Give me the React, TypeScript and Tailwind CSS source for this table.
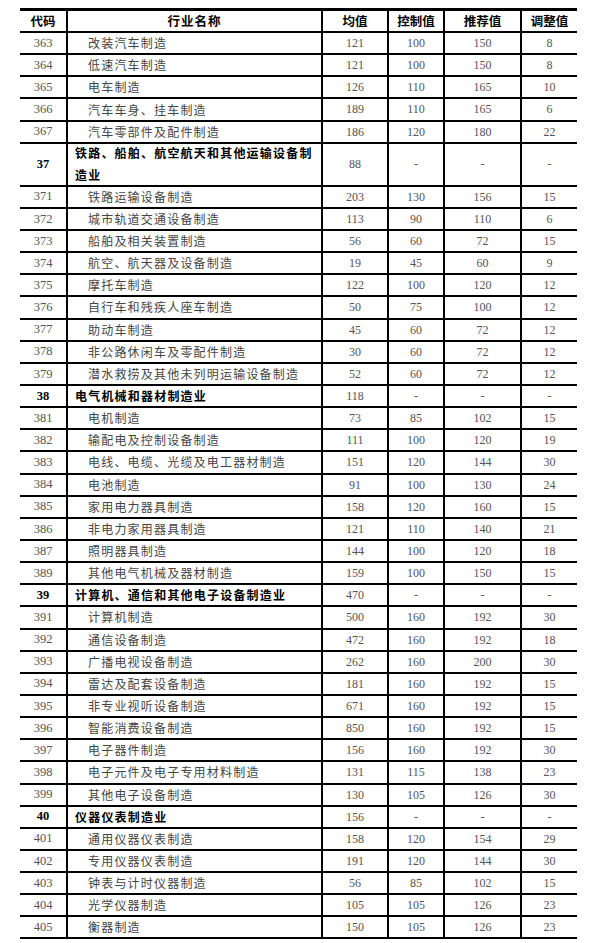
import React from 'react';

type Row = {
  code: string;
  name: string;
  vals: [string, string, string, string];
  head?: boolean;
  tall?: boolean;
};

const rows: Row[] = [
  { code: '363', name: '改装汽车制造', vals: ['121', '100', '150', '8'] },
  { code: '364', name: '低速汽车制造', vals: ['121', '100', '150', '8'] },
  { code: '365', name: '电车制造', vals: ['126', '110', '165', '10'] },
  { code: '366', name: '汽车车身、挂车制造', vals: ['189', '110', '165', '6'] },
  { code: '367', name: '汽车零部件及配件制造', vals: ['186', '120', '180', '22'] },
  { code: '37', name: '铁路、船舶、航空航天和其他运输设备制造业', vals: ['88', '-', '-', '-'], head: true, tall: true },
  { code: '371', name: '铁路运输设备制造', vals: ['203', '130', '156', '15'] },
  { code: '372', name: '城市轨道交通设备制造', vals: ['113', '90', '110', '6'] },
  { code: '373', name: '船舶及相关装置制造', vals: ['56', '60', '72', '15'] },
  { code: '374', name: '航空、航天器及设备制造', vals: ['19', '45', '60', '9'] },
  { code: '375', name: '摩托车制造', vals: ['122', '100', '120', '12'] },
  { code: '376', name: '自行车和残疾人座车制造', vals: ['50', '75', '100', '12'] },
  { code: '377', name: '助动车制造', vals: ['45', '60', '72', '12'] },
  { code: '378', name: '非公路休闲车及零配件制造', vals: ['30', '60', '72', '12'] },
  { code: '379', name: '潜水救捞及其他未列明运输设备制造', vals: ['52', '60', '72', '12'] },
  { code: '38', name: '电气机械和器材制造业', vals: ['118', '-', '-', '-'], head: true },
  { code: '381', name: '电机制造', vals: ['73', '85', '102', '15'] },
  { code: '382', name: '输配电及控制设备制造', vals: ['111', '100', '120', '19'] },
  { code: '383', name: '电线、电缆、光缆及电工器材制造', vals: ['151', '120', '144', '30'] },
  { code: '384', name: '电池制造', vals: ['91', '100', '130', '24'] },
  { code: '385', name: '家用电力器具制造', vals: ['158', '120', '160', '15'] },
  { code: '386', name: '非电力家用器具制造', vals: ['121', '110', '140', '21'] },
  { code: '387', name: '照明器具制造', vals: ['144', '100', '120', '18'] },
  { code: '389', name: '其他电气机械及器材制造', vals: ['159', '100', '150', '15'] },
  { code: '39', name: '计算机、通信和其他电子设备制造业', vals: ['470', '-', '-', '-'], head: true },
  { code: '391', name: '计算机制造', vals: ['500', '160', '192', '30'] },
  { code: '392', name: '通信设备制造', vals: ['472', '160', '192', '18'] },
  { code: '393', name: '广播电视设备制造', vals: ['262', '160', '200', '30'] },
  { code: '394', name: '雷达及配套设备制造', vals: ['181', '160', '192', '15'] },
  { code: '395', name: '非专业视听设备制造', vals: ['671', '160', '192', '15'] },
  { code: '396', name: '智能消费设备制造', vals: ['850', '160', '192', '15'] },
  { code: '397', name: '电子器件制造', vals: ['156', '160', '192', '30'] },
  { code: '398', name: '电子元件及电子专用材料制造', vals: ['131', '115', '138', '23'] },
  { code: '399', name: '其他电子设备制造', vals: ['130', '105', '126', '30'] },
  { code: '40', name: '仪器仪表制造业', vals: ['156', '-', '-', '-'], head: true },
  { code: '401', name: '通用仪器仪表制造', vals: ['158', '120', '154', '29'] },
  { code: '402', name: '专用仪器仪表制造', vals: ['191', '120', '144', '30'] },
  { code: '403', name: '钟表与计时仪器制造', vals: ['56', '85', '102', '15'] },
  { code: '404', name: '光学仪器制造', vals: ['105', '105', '126', '23'] },
  { code: '405', name: '衡器制造', vals: ['150', '105', '126', '23'] },
];

const cjk = "font-['Noto_Sans_CJK_SC',sans-serif]";
const num = "font-['Liberation_Serif','Noto_Sans_CJK_SC',serif]";
const valCols = ['w-[66px]', 'w-[56px]', 'w-[77px]', 'w-[55px]'];

const App = () => {
  return (
    <div className="min-h-[943px] w-[599px] bg-white pt-[8px] pl-[20px]">
      <div className="w-[557px] border-t-[3px] border-black">
        <div className={`flex h-[22px] border-b-2 border-black text-[12.5px] font-bold text-black ${cjk}`}>
          <div className="flex w-[48px] items-center justify-center border-r-2 border-black">代码</div>
          <div className="flex w-[255px] items-center justify-center border-r-2 border-black tracking-[1px]">行业名称</div>
          <div className="flex w-[66px] items-center justify-center border-r-2 border-black">均值</div>
          <div className="flex w-[56px] items-center justify-center border-r-2 border-black">控制值</div>
          <div className="flex w-[77px] items-center justify-center border-r-2 border-black">推荐值</div>
          <div className="flex w-[55px] items-center justify-center">调整值</div>
        </div>
        {rows.map(r => (
          <div
            key={r.code}
            className={`flex border-b-2 border-black ${r.tall ? 'h-[43px]' : 'h-[22.15px]'}`}
          >
            <div
              className={`flex w-[48px] items-center justify-center border-r-2 border-black text-[12.5px] ${num} ${
                r.head ? 'font-bold text-black' : 'text-[#555]'
              }`}
            >
              {r.code}
            </div>
            <div
              className={`flex w-[255px] items-center border-r-2 border-black text-[12px] leading-[22px] ${cjk} ${
                r.head
                  ? 'pl-[7px] pr-[6px] font-bold text-black tracking-[1.2px]'
                  : 'pl-[20px] text-[#444] tracking-[1.2px]'
              }`}
            >
              <span>{r.name}</span>
            </div>
            {r.vals.map((v, i) => (
              <div
                key={i}
                className={`flex ${valCols[i]} items-center justify-center text-[12px] text-[#555] ${num} ${
                  i < 3 ? 'border-r-2 border-black' : ''
                }`}
              >
                {v}
              </div>
            ))}
          </div>
        ))}
      </div>
    </div>
  );
};

export default App;
